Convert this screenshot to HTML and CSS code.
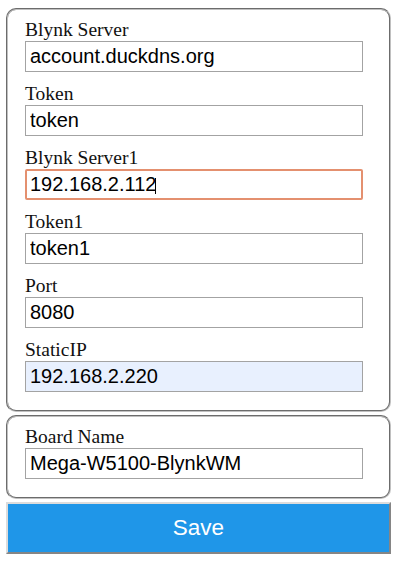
FILE: index.html
```html
<!DOCTYPE html>
<html>
<head>
<meta charset="utf-8">
<link rel="stylesheet" href="styles.css">
</head>
<body>
<div class="page">
  <fieldset class="group">
    <div class="row">
      <label class="lbl">Blynk Server</label>
      <input class="field" type="text" value="account.duckdns.org">
    </div>
    <div class="row">
      <label class="lbl">Token</label>
      <input class="field" type="text" value="token">
    </div>
    <div class="row">
      <label class="lbl">Blynk Server1</label>
      <div class="field-wrap">
        <input class="field focused" type="text" value="192.168.2.112">
        <span class="caret"></span>
      </div>
    </div>
    <div class="row">
      <label class="lbl">Token1</label>
      <input class="field" type="text" value="token1">
    </div>
    <div class="row">
      <label class="lbl">Port</label>
      <input class="field" type="text" value="8080">
    </div>
    <div class="row">
      <label class="lbl">StaticIP</label>
      <input class="field autofill" type="text" value="192.168.2.220">
    </div>
  </fieldset>
  <fieldset class="group">
    <div class="row">
      <label class="lbl">Board Name</label>
      <input class="field" type="text" value="Mega-W5100-BlynkWM">
    </div>
  </fieldset>
  <button class="save" type="button">Save</button>
</div>
</body>
</html>
```
FILE: styles.css
```css
html, body {
  margin: 0;
  padding: 0;
  background: #ffffff;
}

.page {
  width: 385px;
  margin: 8px 0 0 6px;
  display: flex;
  flex-direction: column;
  gap: 3px;
}

.group {
  margin: 0;
  border: 2px groove #c0c0c0;
  border-radius: 10px;
  padding: 9px 0 18px 17px;
  display: flex;
  flex-direction: column;
  gap: 11px;
  min-width: 0;
}

.row {
  display: flex;
  flex-direction: column;
}

.lbl {
  display: block;
  font-family: "Liberation Serif", serif;
  font-size: 19.5px;
  line-height: 22px;
  color: #111;
}

.field-wrap {
  position: relative;
  width: 338px;
  height: 31px;
}

.field {
  box-sizing: border-box;
  width: 338px;
  height: 31px;
  margin: 0;
  padding: 0 4px;
  border: 1px solid #a3a3a3;
  border-radius: 0;
  font-family: "Liberation Sans", Arial, sans-serif;
  font-size: 20px;
  color: #000;
  background: #fff;
  outline: none;
}

.field.focused {
  border: 2px solid #e4906f;
  border-radius: 2px;
  padding: 0 3px;
}

.field.autofill {
  background: #e8f0fe;
}

.caret {
  position: absolute;
  left: 130px;
  top: 9px;
  width: 1px;
  height: 16px;
  background: #000;
}

.save {
  box-sizing: border-box;
  width: 385px;
  height: 52px;
  margin: 0;
  padding: 0;
  border-style: solid;
  border-width: 2px;
  border-color: #dcdcdc #858585 #858585 #dcdcdc;
  background: #1f96e8;
  color: #ffffff;
  font-family: "Liberation Sans", Arial, sans-serif;
  font-size: 22.5px;
  cursor: pointer;
}
```
